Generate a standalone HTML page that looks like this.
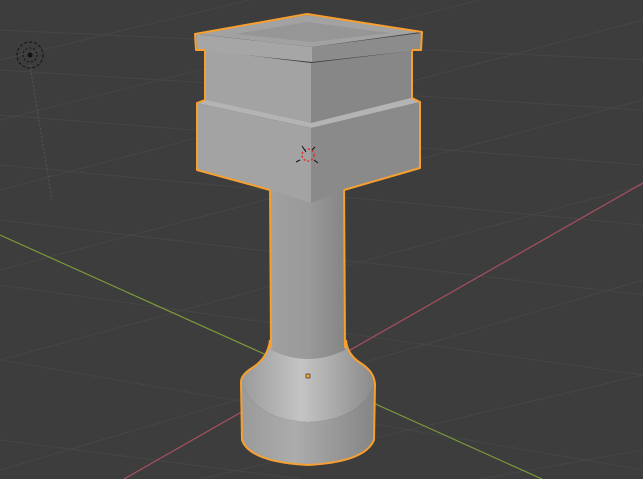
<!DOCTYPE html>
<html><head><style>html,body{margin:0;padding:0;background:#3d3d3d;overflow:hidden}svg{display:block}</style></head><body>
<svg width="643" height="479" viewBox="0 0 643 479" xmlns="http://www.w3.org/2000/svg">
<defs>
<linearGradient id="cone" x1="0" x2="1" y1="0" y2="0">
<stop offset="0" stop-color="#9a9a9a"/><stop offset="0.45" stop-color="#c4c4c4"/><stop offset="1" stop-color="#8a8a8a"/>
</linearGradient>
<linearGradient id="cyl" x1="0" x2="1" y1="0" y2="0">
<stop offset="0" stop-color="#9a9a9a"/><stop offset="0.4" stop-color="#acacac"/><stop offset="1" stop-color="#858585"/>
</linearGradient>
<linearGradient id="stem" x1="0" x2="1" y1="0" y2="0">
<stop offset="0" stop-color="#a0a0a0"/><stop offset="0.5" stop-color="#9a9a9a"/><stop offset="1" stop-color="#858585"/>
</linearGradient>
</defs>
<rect width="643" height="479" fill="#3d3d3d"/>
<g stroke="#464646" stroke-width="1" fill="none">
<path d="M0,30 L643,60 M0,70 L643,110 M0,115 L643,165 M0,165 L643,225 M0,220 L643,295 M0,285 L643,375 M0,360 L643,470 M0,440 L300,479"/>
<path d="M0,60 L250,0 M0,120 L480,0 M0,190 L643,20 M0,270 L643,100 M0,360 L643,185 M0,470 L643,280 M200,479 L643,375 M480,479 L643,450"/>
</g>
<path d="M30,65 L52,200" stroke="#555" stroke-dasharray="2,2"/>
<line x1="0" y1="235" x2="542" y2="479" stroke="#7a9a3a" stroke-width="1.2"/>
<line x1="124" y1="479" x2="643" y2="183" stroke="#a8505e" stroke-width="1.2"/>
<circle cx="30" cy="55" r="13" fill="none" stroke="#111" stroke-dasharray="3,2"/>
<circle cx="30" cy="55" r="7" fill="none" stroke="#111" stroke-dasharray="2,2"/>
<circle cx="30" cy="55" r="2.5" fill="#111"/>

<!-- base -->
<path d="M241,382 L242,440 Q250,462 308,465 Q365,462 374,440 L375,384 Q360,420 308,422 Q255,420 241,382Z" fill="url(#cyl)"/>
<path d="M270,340 Q268,358 252,368 Q241,375 241,382 Q255,420 308,422 Q360,420 375,384 Q374,372 362,364 Q347,355 346,340 Z" fill="url(#cone)"/>
<path d="M270,340 Q268,358 252,368 Q241,375 241,382 L242,440 Q250,462 308,465 Q365,462 374,440 L375,384 Q374,372 362,364 Q347,355 346,340" fill="none" stroke="#f7a030" stroke-width="2"/>
<!-- stem -->
<path d="M270,180 L271,350 Q308,368 345,350 L344,180 Z" fill="url(#stem)"/>
<path d="M270,180 L271,348 M344,180 L345,348" stroke="#f7a030" stroke-width="2"/>
<!-- lower block -->
<path d="M197,103 L311,128 L311,203 L270,190 L197,170 Z" fill="#a3a3a3"/>
<path d="M311,128 L420,102 L420,168 L344,190 L311,203 Z" fill="#8a8a8a"/>
<path d="M197,103 L205,99 L311,122 L412,97 L420,102 L311,128 Z" fill="#b4b4b4"/>
<path d="M270,190 L197,170 L197,103 L205,100 M412,98 L420,102 L420,168 L344,190" fill="none" stroke="#f7a030" stroke-width="2" stroke-linejoin="round"/>
<!-- upper block -->
<path d="M206,50 L311,63 L311,123 L206,100 Z" fill="#a3a3a3"/>
<path d="M311,63 L411,51 L411,98 L311,123 Z" fill="#878787"/>
<path d="M205,50 L205,100 M412,50 L412,98" stroke="#f7a030" stroke-width="2"/>
<!-- cap -->
<path d="M196,34 L312,47 L312,62 L197,50 Z" fill="#a6a6a6"/>
<path d="M312,47 L421,33 L421,50 L312,62 Z" fill="#8c8c8c"/>
<path d="M197,34 L307,15 L421,32 L312,47 Z" fill="#a2a2a2"/>
<path d="M235,34 L307,22 L390,33 L312,42 Z" fill="#969696"/>
<path d="M205,50 L196,50 L195,34 L307,14 L422,32 L421,50 L412,50" fill="none" stroke="#f7a030" stroke-width="2" stroke-linejoin="round"/>

<circle cx="308" cy="155" r="6" fill="none" stroke="#d33" stroke-dasharray="2,2" stroke-width="1.5"/>
<path d="M302,146 L306,152 M314,160 L318,163 M300,160 L296,162 M312,150 L315,147" stroke="#111"/>
<rect x="306" y="374" width="4" height="4" fill="#f7a030" stroke="#222" stroke-width="0.6"/>
</svg>
</body></html>
